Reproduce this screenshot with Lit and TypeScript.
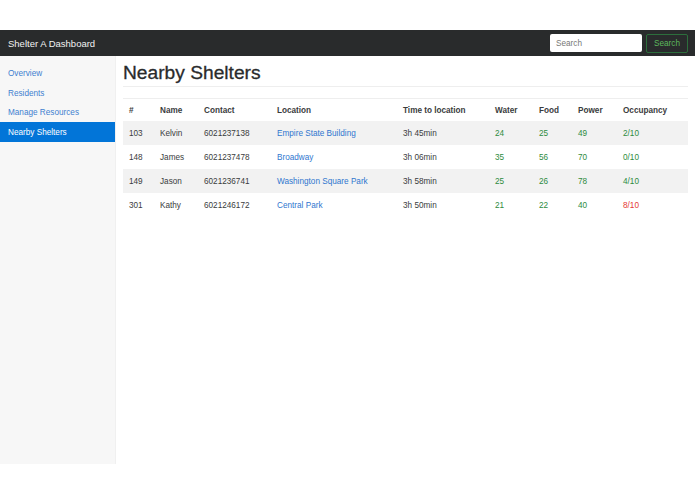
import { LitElement, html, css } from "lit";
import { customElement } from "lit/decorators.js";

const rows = [
  ["103", "Kelvin", "6021237138", "Empire State Building", "3h 45min", "24", "25", "49", "2/10", false],
  ["148", "James", "6021237478", "Broadway", "3h 06min", "35", "56", "70", "0/10", false],
  ["149", "Jason", "6021236741", "Washington Square Park", "3h 58min", "25", "26", "78", "4/10", false],
  ["301", "Kathy", "6021246172", "Central Park", "3h 50min", "21", "22", "40", "8/10", true],
] as const;

@customElement("app-root")
export class AppRoot extends LitElement {
  static styles = css`
    :host { display: block; width: 695px; height: 494px; padding-top: 30px; box-sizing: border-box; background: #fff; font-family: "Liberation Sans", Arial, sans-serif; font-size: 8.2px; color: #3a3c3d; }
    .nav { height: 26px; background: #292b2c; display: flex; align-items: center; justify-content: space-between; padding: 0 7px 0 8px; box-sizing: border-box; }
    .brand { color: #f2f2f2; font-size: 9.5px; }
    .form { display: flex; gap: 4px; align-items: center; }
    .input { width: 92px; height: 18px; box-sizing: border-box; background: #fff; border-radius: 2px; padding: 0 6px; display: flex; align-items: center; color: #777; }
    .btn { width: 42px; height: 19px; box-sizing: border-box; border: 1px solid #2c6e3c; border-radius: 2px; display: flex; align-items: center; justify-content: center; color: #5cb85c; }
    .body { display: flex; height: 408px; }
    .side { width: 116px; background: #f7f7f7; border-right: 1px solid #f0f0f0; box-sizing: border-box; padding-top: 7.5px; display: flex; flex-direction: column; }
    .side a { height: 19.5px; display: flex; align-items: center; padding: 1px 0 0 8px; color: #3f7fd0; width: 115px; box-sizing: border-box; }
    .side a.active { background: #0275d8; color: #fff; }
    .main { width: 565px; margin-left: 7px; }
    h1 { margin: 0; height: 31px; box-sizing: border-box; padding-top: 5px; border-bottom: 1px solid #eee; font-size: 19.2px; font-weight: 400; line-height: 24px; color: #292b2c; -webkit-text-stroke: 0.3px #292b2c; }
    table { margin-top: 11px; width: 565px; table-layout: fixed; border-collapse: collapse; border-top: 1px solid #eee; }
    th { font-weight: 700; text-align: left; padding: 0 0 0 6px; height: 22px; }
    td { padding: 0 0 0 6px; height: 24px; }
    tbody tr:nth-child(odd) { background: #f2f2f2; }
    .link { color: #2f76cf; }
    .good { color: #2e8b3d; }
    .bad { color: #e53935; }
    .c1 { width: 31px; } .c2 { width: 44px; } .c3 { width: 73px; } .c4 { width: 126px; } .c5 { width: 92px; }
    .c6 { width: 44px; } .c7 { width: 39px; } .c8 { width: 45px; } .c9 { width: 71px; }
  `;

  render() {
    return html`
      <div class="nav">
        <div class="brand">Shelter A Dashboard</div>
        <div class="form"><div class="input">Search</div><div class="btn">Search</div></div>
      </div>
      <div class="body">
        <div class="side">
          <a>Overview</a><a>Residents</a><a>Manage Resources</a><a class="active">Nearby Shelters</a>
        </div>
        <div class="main">
          <h1>Nearby Shelters</h1>
          <table>
            <colgroup>
              ${[1, 2, 3, 4, 5, 6, 7, 8, 9].map((n) => html`<col class="c${n}" />`)}
            </colgroup>
            <thead><tr>
              ${["#", "Name", "Contact", "Location", "Time to location", "Water", "Food", "Power", "Occupancy"].map((h) => html`<th>${h}</th>`)}
            </tr></thead>
            <tbody>
              ${rows.map((r) => html`<tr>
                <td>${r[0]}</td><td>${r[1]}</td><td>${r[2]}</td>
                <td class="link">${r[3]}</td><td>${r[4]}</td>
                <td class="good">${r[5]}</td><td class="good">${r[6]}</td><td class="good">${r[7]}</td>
                <td class="${r[9] ? "bad" : "good"}">${r[8]}</td>
              </tr>`)}
            </tbody>
          </table>
        </div>
      </div>
    `;
  }
}
